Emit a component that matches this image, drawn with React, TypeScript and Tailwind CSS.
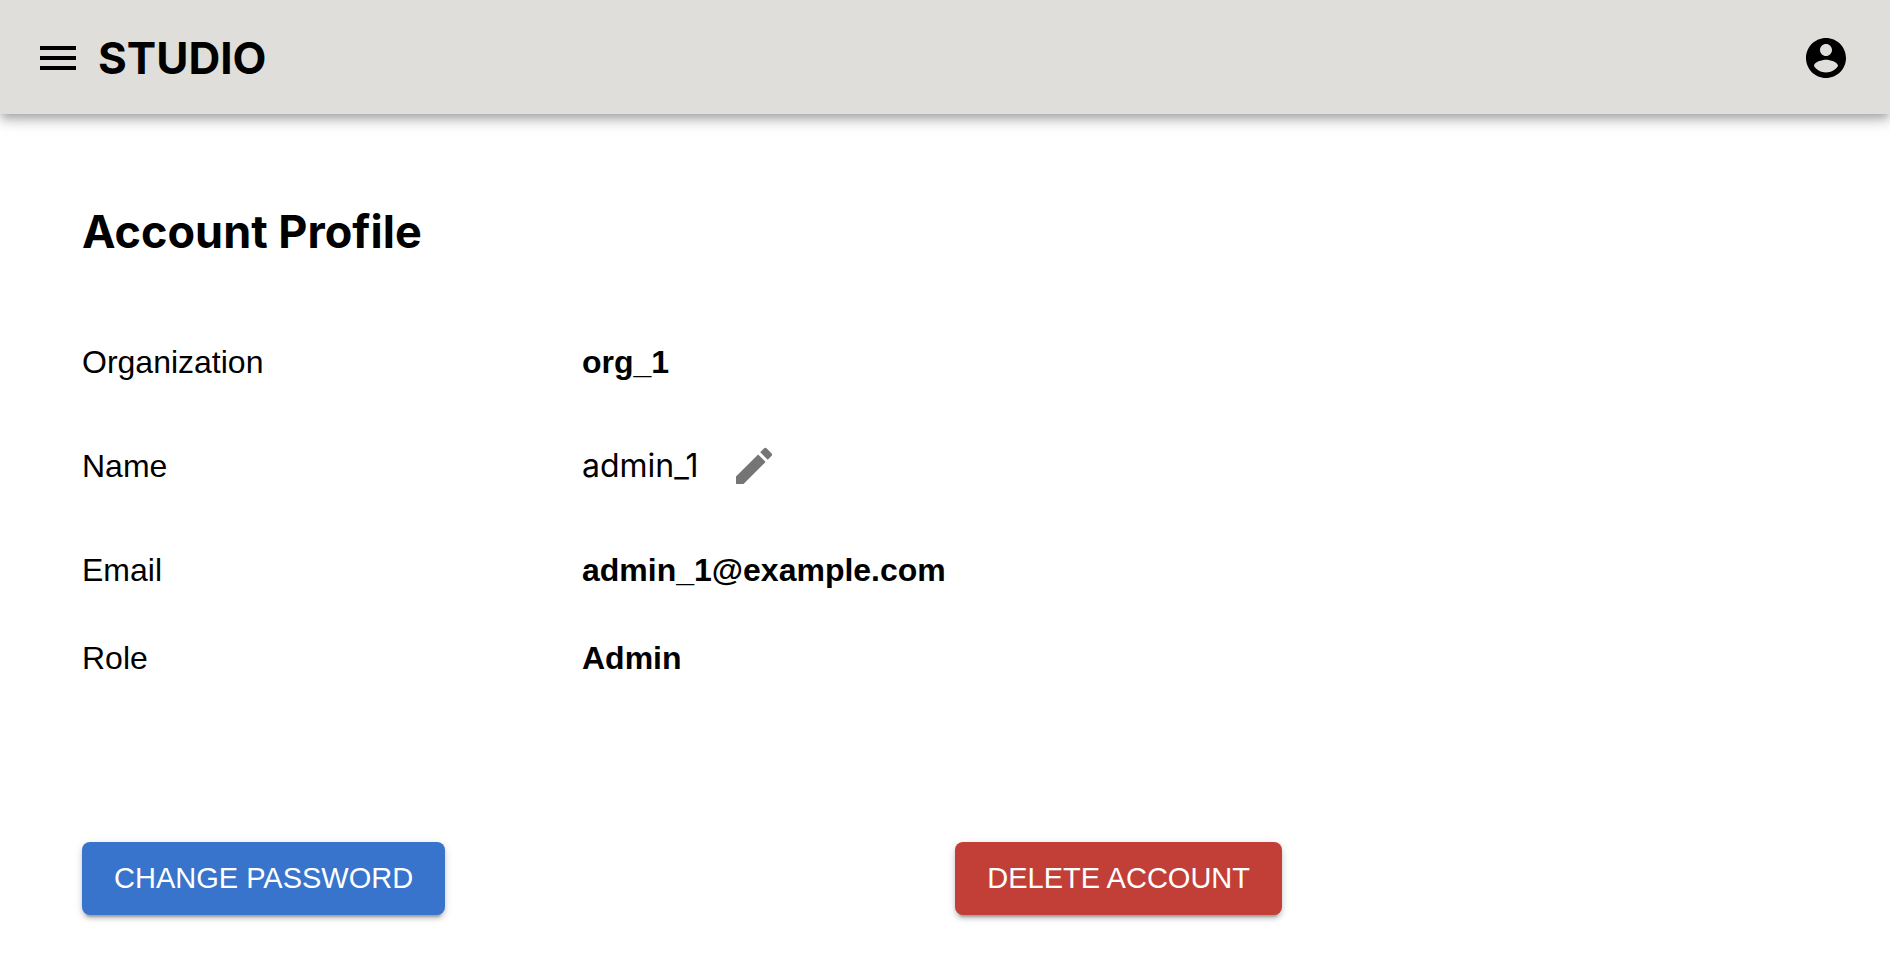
import type { ReactNode } from "react";
import { MdEdit, MdMenu } from "react-icons/md";

function AccountIcon() {
  return (
    <svg viewBox="0 0 24 24" fill="currentColor" aria-hidden="true" className="size-12">
      <path d="M12 2C6.48 2 2 6.48 2 12s4.48 10 10 10 10-4.48 10-10S17.52 2 12 2zm0 3c1.66 0 3 1.34 3 3s-1.34 3-3 3-3-1.34-3-3 1.34-3 3-3zm0 14.2c-2.5 0-4.71-1.28-6-3.22.03-1.99 4-3.08 6-3.08 1.99 0 5.97 1.09 6 3.08-1.29 1.94-3.5 3.22-6 3.22z" />
    </svg>
  );
}

function ProfileRow({ label, children }: { label: string; children: ReactNode }) {
  return (
    <div className="grid grid-cols-12 items-center">
      <dt className="col-span-5">{label}</dt>
      <dd className="col-span-7">{children}</dd>
    </div>
  );
}

const buttonBase =
  "rounded-lg px-8 py-3 text-[29px] leading-[49px] text-white uppercase whitespace-nowrap shadow-[0_6px_2px_-4px_rgba(0,0,0,0.2),0_4px_4px_0_rgba(0,0,0,0.14),0_2px_10px_0_rgba(0,0,0,0.12)]";

export default function App() {
  return (
    <div className="min-h-screen bg-white font-['Liberation_Sans',Arial,sans-serif] text-black">
      <header className="flex items-center justify-between bg-[#dfdeda] pt-[34px] pr-10 pb-8 pl-[34px] shadow-[0_4px_8px_-2px_rgba(0,0,0,0.2),0_8px_10px_0_rgba(0,0,0,0.14),0_2px_20px_0_rgba(0,0,0,0.12)]">
        <div className="flex items-center gap-4">
          <button type="button" aria-label="Open menu">
            <MdMenu className="size-12" />
          </button>
          <span className="font-['Inter',sans-serif] text-[44px] leading-12 font-bold">STUDIO</span>
        </div>
        <button type="button" aria-label="Account">
          <AccountIcon />
        </button>
      </header>

      <main className="max-w-[1282px] pt-[90px] pb-10 pl-[82px]">
        <h1 className="font-['Inter',sans-serif] text-[45px] leading-14 font-bold">Account Profile</h1>

        <dl className="mt-[78px] flex flex-col gap-10 text-[32px] leading-12">
          <ProfileRow label="Organization">
            <strong>org_1</strong>
          </ProfileRow>
          <ProfileRow label="Name">
            <div className="flex items-center gap-4">
              <span className="font-['Inter',sans-serif]">admin_1</span>
              <button type="button" aria-label="Edit name" className="p-4 text-[#757575]">
                <MdEdit className="size-12" />
              </button>
            </div>
          </ProfileRow>
          <ProfileRow label="Email">
            <strong>admin_1@example.com</strong>
          </ProfileRow>
          <ProfileRow label="Role">
            <strong>Admin</strong>
          </ProfileRow>
        </dl>

        <div className="mt-40 flex justify-between">
          <button type="button" className={`${buttonBase} bg-[#3874cb]`}>
            Change Password
          </button>
          <button type="button" className={`${buttonBase} bg-[#c23f38]`}>
            Delete Account
          </button>
        </div>
      </main>
    </div>
  );
}
